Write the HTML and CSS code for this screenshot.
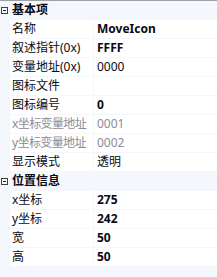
FILE: index.html
```
<!DOCTYPE html>
<html>
<head>
<meta charset="utf-8">
<link rel="stylesheet" href="styles.css">
</head>
<body>
<div class="grid">
  <div class="cat"><span class="toggle"></span><span class="cat-title">基本项</span></div>
  <div class="row"><div class="name">名称</div><div class="val bold">MoveIcon</div></div>
  <div class="row"><div class="name">叙述指针(0x)</div><div class="val bold">FFFF</div></div>
  <div class="row"><div class="name">变量地址(0x)</div><div class="val">0000</div></div>
  <div class="row"><div class="name">图标文件</div><div class="val"></div></div>
  <div class="row"><div class="name">图标编号</div><div class="val bold">0</div></div>
  <div class="row dis"><div class="name">x坐标变量地址</div><div class="val">0001</div></div>
  <div class="row dis"><div class="name">y坐标变量地址</div><div class="val">0002</div></div>
  <div class="row"><div class="name">显示模式</div><div class="val">透明</div></div>
  <div class="cat"><span class="toggle"></span><span class="cat-title">位置信息</span></div>
  <div class="row"><div class="name">x坐标</div><div class="val bold">275</div></div>
  <div class="row"><div class="name">y坐标</div><div class="val bold">242</div></div>
  <div class="row"><div class="name">宽</div><div class="val bold">50</div></div>
  <div class="row"><div class="name">高</div><div class="val bold">50</div></div>
</div>
</body>
</html>
```
FILE: styles.css
```
html, body {
  margin: 0;
  padding: 0;
  background: #f4f7fc;
}
body {
  width: 217px;
  height: 277px;
  overflow: hidden;
  font-family: "Noto Sans", "Noto Sans CJK SC", sans-serif;
  font-size: 12px;
  color: #0a0a14;
}
.grid {
  border-top: 1px solid #a0a0a0;
  display: flex;
  flex-direction: column;
  gap: 1px;
}
.cat {
  height: 18px;
  display: flex;
  align-items: center;
}
.toggle {
  width: 7px;
  height: 7px;
  margin-left: 1px;
  border: 1px solid #404040;
  box-sizing: border-box;
  position: relative;
  margin-right: 4px;
}
.toggle::after {
  content: "";
  position: absolute;
  left: 1px;
  right: 1px;
  top: 2px;
  height: 1px;
  background: #202020;
}
.cat-title {
  font-weight: bold;
  line-height: 18px;
}
.row {
  height: 18px;
  display: flex;
  padding-left: 10px;
  gap: 1px;
}
.name {
  flex: 0 0 83px;
  background: #fff;
  padding-left: 2px;
  box-sizing: border-box;
  line-height: 18px;
  white-space: nowrap;
  overflow: hidden;
}
.val {
  flex: 1;
  background: #fff;
  padding-left: 3px;
  line-height: 18px;
  white-space: nowrap;
}
.bold {
  font-weight: bold;
}
.dis .name, .dis .val {
  color: #8c8c96;
}
.dis .name {
  letter-spacing: -0.6px;
}
```
